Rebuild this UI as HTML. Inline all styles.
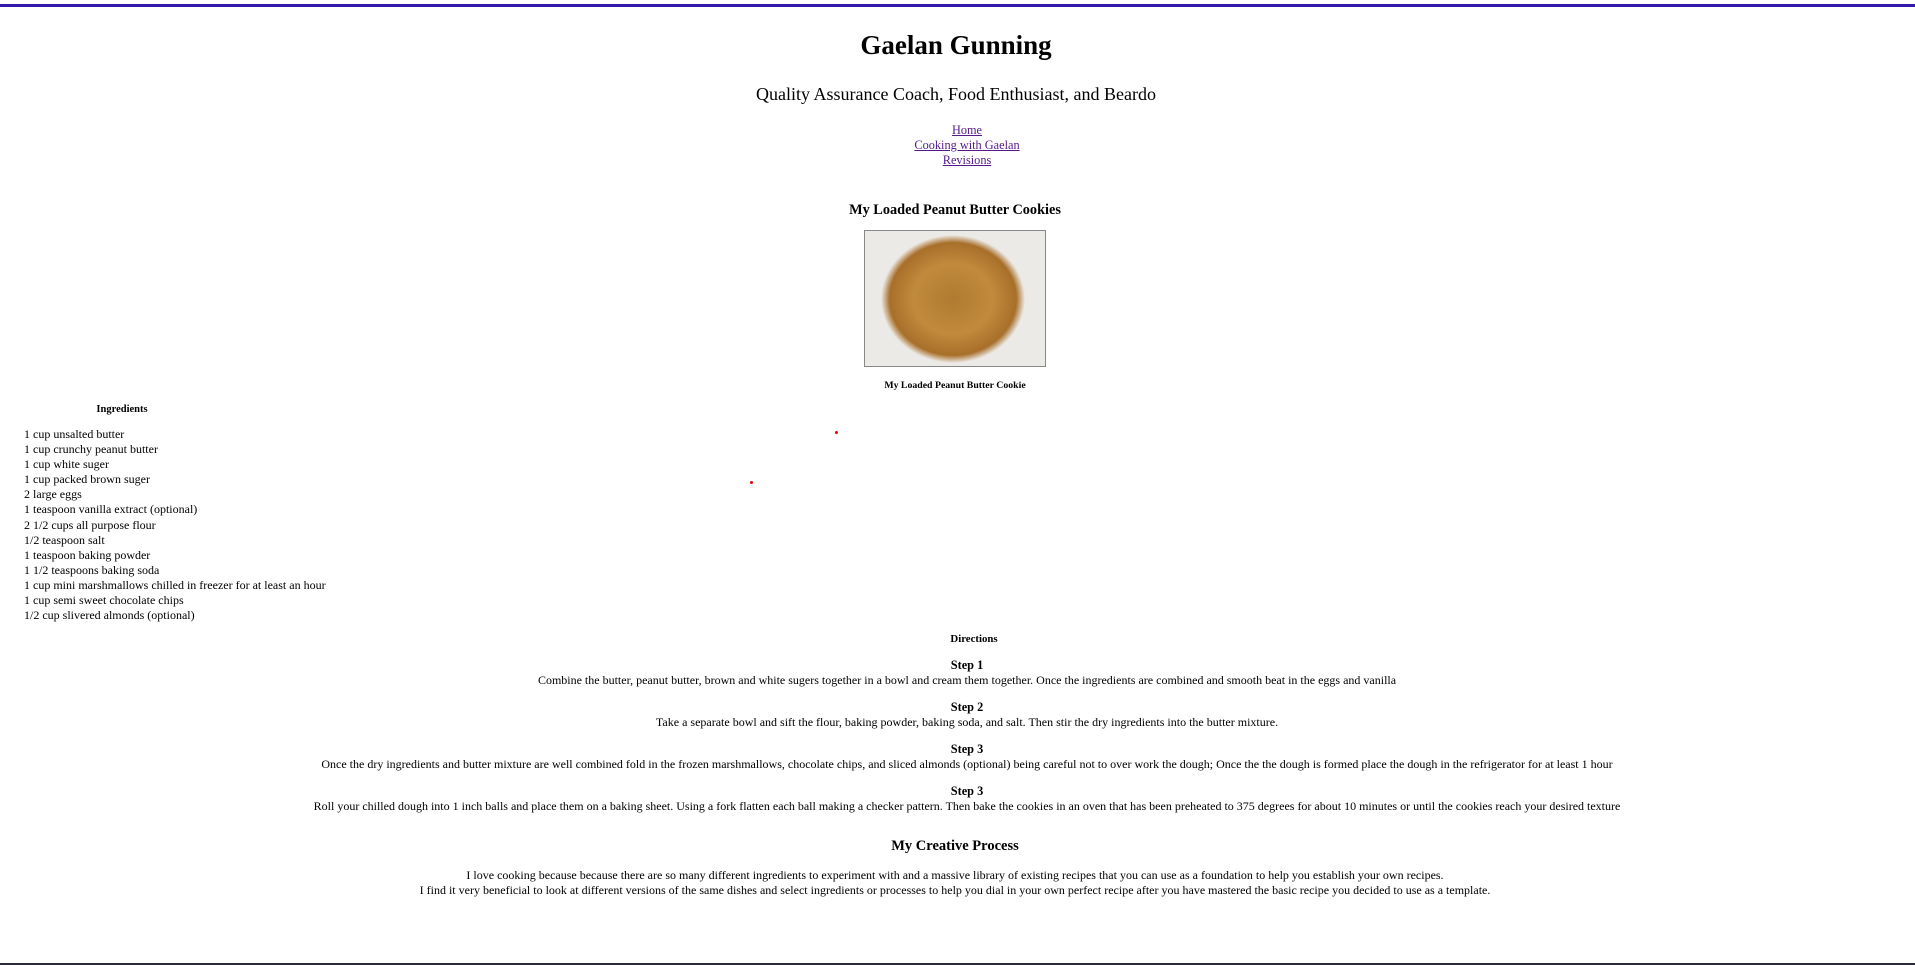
<!DOCTYPE html>
<html><head><meta charset="utf-8"><style>
html,body{margin:0;padding:0;background:#fff;width:1915px;height:965px;overflow:hidden;position:relative;font-family:"Liberation Serif",serif;color:#000}
.c{position:absolute;white-space:nowrap;transform:translateX(-50%);line-height:1}
.b{font-weight:bold}
a{color:#551a8b}
.ing{position:absolute;left:24px;top:427px;font-size:12px;line-height:15.1px}
</style></head><body>
<div style="position:absolute;left:0;top:4px;width:1915px;height:3px;background:#3419a8"></div>
<div class="c b" style="left:956px;top:32px;font-size:27px">Gaelan Gunning</div>
<div class="c" style="left:956px;top:85px;font-size:18px">Quality Assurance Coach, Food Enthusiast, and Beardo</div>
<div class="c" style="left:967px;top:123px;font-size:12.3px;line-height:15px;text-align:center"><a href="#">Home</a><br><a href="#">Cooking with Gaelan</a><br><a href="#">Revisions</a></div>
<div class="c b" style="left:955px;top:203px;font-size:14.3px">My Loaded Peanut Butter Cookies</div>
<div style="position:absolute;left:864px;top:230px;width:180px;height:135px;border:1px solid #888;background:radial-gradient(ellipse 72px 64px at 88px 68px,#b07a30 0%,#c18a3c 55%,#a86f2a 88%,#eceae6 100%);"></div>
<div class="c b" style="left:955px;top:381px;font-size:9.8px">My Loaded Peanut Butter Cookie</div>
<div class="c b" style="left:122px;top:405px;font-size:10.5px">Ingredients</div>
<div class="ing">1 cup unsalted butter<br>1 cup crunchy peanut butter<br>1 cup white suger<br>1 cup packed brown suger<br>2 large eggs<br>1 teaspoon vanilla extract (optional)<br>2 1/2 cups all purpose flour<br>1/2 teaspoon salt<br>1 teaspoon baking powder<br>1 1/2 teaspoons baking soda<br>1 cup mini marshmallows chilled in freezer for at least an hour<br>1 cup semi sweet chocolate chips<br>1/2 cup slivered almonds (optional)</div>
<div style="position:absolute;left:835px;top:431px;width:3px;height:3px;border-radius:50%;background:#e00"></div>
<div style="position:absolute;left:750px;top:481px;width:3px;height:3px;border-radius:50%;background:#e00"></div>
<div class="c b" style="left:974px;top:634px;font-size:10.8px">Directions</div>
<div class="c b" style="left:967px;top:659px;font-size:12.3px">Step 1</div>
<div class="c" style="left:967px;top:674px;font-size:12px">Combine the butter, peanut butter, brown and white sugers together in a bowl and cream them together. Once the ingredients are combined and smooth beat in the eggs and vanilla</div>
<div class="c b" style="left:967px;top:701px;font-size:12.3px">Step 2</div>
<div class="c" style="left:967px;top:716px;font-size:12px">Take a separate bowl and sift the flour, baking powder, baking soda, and salt. Then stir the dry ingredients into the butter mixture.</div>
<div class="c b" style="left:967px;top:743px;font-size:12.3px">Step 3</div>
<div class="c" style="left:967px;top:758px;font-size:12px">Once the dry ingredients and butter mixture are well combined fold in the frozen marshmallows, chocolate chips, and sliced almonds (optional) being careful not to over work the dough; Once the the dough is formed place the dough in the refrigerator for at least 1 hour</div>
<div class="c b" style="left:967px;top:785px;font-size:12.3px">Step 3</div>
<div class="c" style="left:967px;top:800px;font-size:12px">Roll your chilled dough into 1 inch balls and place them on a baking sheet. Using a fork flatten each ball making a checker pattern. Then bake the cookies in an oven that has been preheated to 375 degrees for about 10 minutes or until the cookies reach your desired texture</div>
<div class="c b" style="left:955px;top:839px;font-size:14.5px">My Creative Process</div>
<div class="c" style="left:955px;top:868px;font-size:12px;line-height:15px;text-align:center">I love cooking because because there are so many different ingredients to experiment with and a massive library of existing recipes that you can use as a foundation to help you establish your own recipes.<br>I find it very beneficial to look at different versions of the same dishes and select ingredients or processes to help you dial in your own perfect recipe after you have mastered the basic recipe you decided to use as a template.</div>
<div style="position:absolute;left:0;top:963px;width:1915px;height:2px;background:#2a2a3a"></div>
</body></html>
